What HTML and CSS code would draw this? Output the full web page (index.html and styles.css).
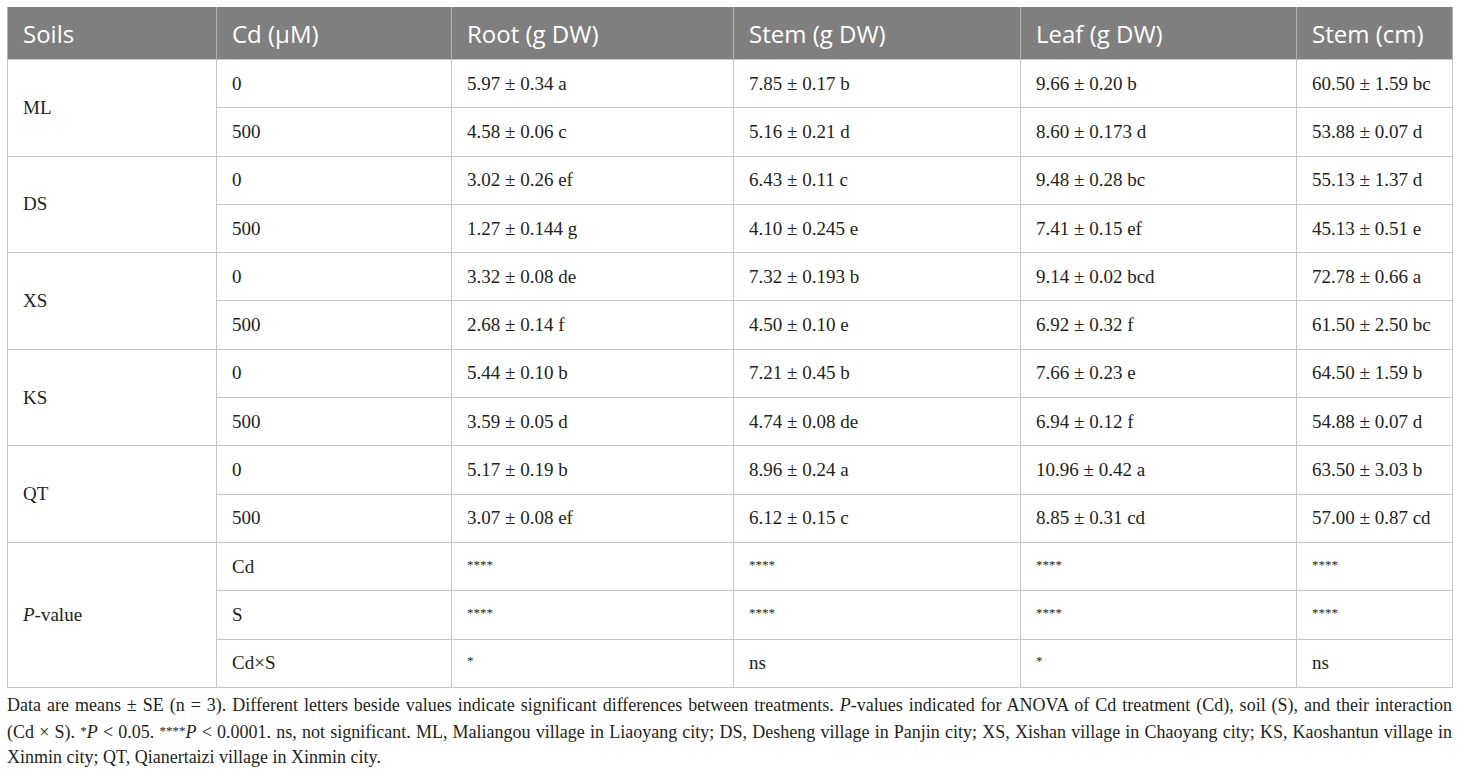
FILE: index.html
```html
<!DOCTYPE html>
<html lang="en">

<head>
  <meta charset="utf-8" />
  <title>Table: biomass under Cd treatment</title>
  <link rel="stylesheet" href="styles.css">
</head>

<body>
  <div class="page">
    <table class="data_table">
      <colgroup>
        <col class="c_soil">
        <col class="c_cd">
        <col class="c_root">
        <col class="c_stem">
        <col class="c_leaf">
        <col class="c_len">
      </colgroup>
      <thead>
        <tr>
          <th>Soils</th>
          <th>Cd (&mu;M)</th>
          <th>Root (g DW)</th>
          <th>Stem (g DW)</th>
          <th>Leaf (g DW)</th>
          <th>Stem (cm)</th>
        </tr>
      </thead>
      <tbody>
        <tr>
          <td rowspan="2">ML</td>
          <td>0</td>
          <td>5.97 &plusmn; 0.34 a</td>
          <td>7.85 &plusmn; 0.17 b</td>
          <td>9.66 &plusmn; 0.20 b</td>
          <td>60.50 &plusmn; 1.59 bc</td>
        </tr>
        <tr>
          <td>500</td>
          <td>4.58 &plusmn; 0.06 c</td>
          <td>5.16 &plusmn; 0.21 d</td>
          <td>8.60 &plusmn; 0.173 d</td>
          <td>53.88 &plusmn; 0.07 d</td>
        </tr>
        <tr>
          <td rowspan="2">DS</td>
          <td>0</td>
          <td>3.02 &plusmn; 0.26 ef</td>
          <td>6.43 &plusmn; 0.11 c</td>
          <td>9.48 &plusmn; 0.28 bc</td>
          <td>55.13 &plusmn; 1.37 d</td>
        </tr>
        <tr>
          <td>500</td>
          <td>1.27 &plusmn; 0.144 g</td>
          <td>4.10 &plusmn; 0.245 e</td>
          <td>7.41 &plusmn; 0.15 ef</td>
          <td>45.13 &plusmn; 0.51 e</td>
        </tr>
        <tr>
          <td rowspan="2">XS</td>
          <td>0</td>
          <td>3.32 &plusmn; 0.08 de</td>
          <td>7.32 &plusmn; 0.193 b</td>
          <td>9.14 &plusmn; 0.02 bcd</td>
          <td>72.78 &plusmn; 0.66 a</td>
        </tr>
        <tr>
          <td>500</td>
          <td>2.68 &plusmn; 0.14 f</td>
          <td>4.50 &plusmn; 0.10 e</td>
          <td>6.92 &plusmn; 0.32 f</td>
          <td>61.50 &plusmn; 2.50 bc</td>
        </tr>
        <tr>
          <td rowspan="2">KS</td>
          <td>0</td>
          <td>5.44 &plusmn; 0.10 b</td>
          <td>7.21 &plusmn; 0.45 b</td>
          <td>7.66 &plusmn; 0.23 e</td>
          <td>64.50 &plusmn; 1.59 b</td>
        </tr>
        <tr>
          <td>500</td>
          <td>3.59 &plusmn; 0.05 d</td>
          <td>4.74 &plusmn; 0.08 de</td>
          <td>6.94 &plusmn; 0.12 f</td>
          <td>54.88 &plusmn; 0.07 d</td>
        </tr>
        <tr>
          <td rowspan="2">QT</td>
          <td>0</td>
          <td>5.17 &plusmn; 0.19 b</td>
          <td>8.96 &plusmn; 0.24 a</td>
          <td>10.96 &plusmn; 0.42 a</td>
          <td>63.50 &plusmn; 3.03 b</td>
        </tr>
        <tr>
          <td>500</td>
          <td>3.07 &plusmn; 0.08 ef</td>
          <td>6.12 &plusmn; 0.15 c</td>
          <td>8.85 &plusmn; 0.31 cd</td>
          <td>57.00 &plusmn; 0.87 cd</td>
        </tr>
        <tr>
          <td rowspan="3"><i>P</i>-value</td>
          <td>Cd</td>
          <td><span class="stars">****</span></td>
          <td><span class="stars">****</span></td>
          <td><span class="stars">****</span></td>
          <td><span class="stars">****</span></td>
        </tr>
        <tr>
          <td>S</td>
          <td><span class="stars">****</span></td>
          <td><span class="stars">****</span></td>
          <td><span class="stars">****</span></td>
          <td><span class="stars">****</span></td>
        </tr>
        <tr>
          <td>Cd&times;S</td>
          <td><span class="stars">*</span></td>
          <td>ns</td>
          <td><span class="stars">*</span></td>
          <td>ns</td>
        </tr>
      </tbody>
    </table>

    <p class="table_note">
      <span class="note_line">Data are means &plusmn; SE (n = 3). Different letters beside values indicate significant differences between treatments. <i>P</i>-values indicated for ANOVA of Cd treatment (Cd), soil (S), and their interaction</span>
      <span class="note_line">(Cd &times; S). <span class="note_star">*</span><i>P</i> &lt; 0.05. <span class="note_star">****</span><i>P</i> &lt; 0.0001. ns, not significant. ML, Maliangou village in Liaoyang city; DS, Desheng village in Panjin city; XS, Xishan village in Chaoyang city; KS, Kaoshantun village in</span>
      Xinmin city; QT, Qianertaizi village in Xinmin city.
    </p>
  </div>
</body>

</html>
```

FILE: styles.css
```css
body {
  margin: 0;
  background: #fff;
  color: #231f20;
}

.page {
  padding: 7px 8px 0 7px;
}

.data_table {
  width: 1445px;
  border-collapse: collapse;
  table-layout: fixed;
  font-family: "Liberation Serif", "Times New Roman", serif;
  font-size: 19px;
}

.c_soil { width: 209px; }
.c_cd { width: 235px; }
.c_root { width: 282px; }
.c_stem { width: 287px; }
.c_leaf { width: 276px; }
.c_len { width: 156px; }

.data_table th {
  background-color: #7f7f7f;
  color: #fff;
  font-family: "Open Sans", "Noto Sans", sans-serif;
  font-weight: normal;
  font-size: 24px;
  text-align: left;
  height: 52px;
  padding: 0 15px;
  border-left: 1px solid #b3b3b3;
  border-right: 1px solid #b3b3b3;
}

.data_table td {
  height: 47.3px;
  padding: 0 15px;
  border: 1px solid #c6c6c6;
  vertical-align: middle;
}

.stars {
  font-size: 13px;
  vertical-align: 4px;
}

.table_note {
  margin: 5px 0 0 0;
  width: 1445px;
  font-family: "Liberation Serif", "Times New Roman", serif;
  font-size: 18px;
  line-height: 25px;
}

/* first two lines are spread to the full width like the printed note */
.note_line {
  display: block;
  white-space: nowrap;
  text-align: justify;
  text-align-last: justify;
}

.note_star {
  font-size: 13px;
  vertical-align: 3px;
}
```
